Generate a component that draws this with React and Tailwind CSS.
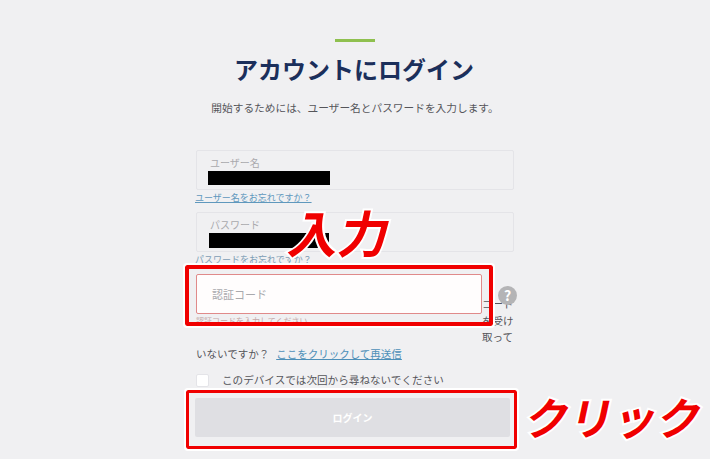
import React from 'react'

const font = { fontFamily: '"Noto Sans CJK JP", "Noto Sans", sans-serif' }

function Field({ label, barClass, linkClass, link }) {
  return (
    <div className="mb-[8px]">
      <div className="h-10 border border-[#e4e4e8] rounded-[2px] pl-[13px] pt-[5px]">
        <div className="text-[10px] leading-[14px] text-[#a9a9ad]">{label}</div>
        <div className={`bg-black ${barClass}`} />
      </div>
      <a className={`block -ml-px mt-[1px] text-[9px] leading-[13px] ${linkClass}`}>{link}</a>
    </div>
  )
}

export default function App() {
  return (
    <div style={font} className="relative h-[459px] w-[710px] overflow-hidden bg-[#f0f0f2]">
      <div className="mx-auto w-[318px] pt-[39px]">
        <div className="mx-auto h-[3px] w-10 bg-[#8fc04f]" />
        <h1 className="mt-[9px] -ml-[17px] -mr-[15px] text-center text-[24px] leading-[36px] font-bold text-[#1b2f5b]">
          アカウントにログイン
        </h1>
        <p className="mt-[13px] -mx-4 text-center text-[10.7px] leading-[16px] text-[#55555a]">
          開始するためには、ユーザー名とパスワードを入力します。
        </p>

        <div className="mt-[34px]">
          <Field
            label="ユーザー名"
            barClass="-ml-[2px] mt-[1px] h-[14px] w-[122px]"
            linkClass="text-[#5f98bd] underline"
            link="ユーザー名をお忘れですか？"
          />
          <Field
            label="パスワード"
            barClass="-ml-[1px] mt-[1px] h-[15px] w-[120px]"
            linkClass="text-[#7d9db5]"
            link="パスワードをお忘れですか？"
          />
        </div>

        <div className="relative text-[10.5px] leading-[16.5px] text-[#55555a]">
          <div className="float-left w-[286px]">
            <div className="h-10 border border-[#e08a8a] rounded-[2px] bg-[#fffdfd] pl-[15px] text-[11px] leading-[38px] text-[#a9a9ad]">
              認証コード
            </div>
            <div className="h-[16px] text-[8px] leading-[14px] text-[#c4a8a8]">認証コードを入力してください</div>
          </div>
          <div className="pt-[22px]">
            コード
            <br />
            を受け
            <br />
            取って
            <br />
            いないですか？
            <a className="ml-[7px] text-[#4d8fb8] underline">ここをクリックして再送信</a>
          </div>
          <div className="absolute right-[-3px] top-[12px] flex h-[19px] w-[19px] items-center justify-center rounded-full bg-[#b4b4b6] text-[14px] font-bold text-white">
            ?
          </div>
        </div>

        <label className="mt-[10px] flex items-center">
          <span className="h-[13px] w-[13px] rounded-[2px] border border-[#e4e4e8] bg-white" />
          <span className="ml-[13px] text-[10.6px] leading-[16px] text-[#55555a]">このデバイスでは次回から尋ねないでください</span>
        </label>

        <button className="mt-[10px] -ml-px block h-[39px] w-[315px] rounded-[2px] bg-[#dfdfe3] text-[10px] font-bold text-white">
          ログイン
        </button>
      </div>

      {/* annotations pasted over the screenshot */}
      <div className="absolute left-[185px] top-[265px] h-[61px] w-[308px] rounded-[2px] border-4 border-[#f00000] outline-2 outline-white" />
      <div className="absolute left-[186px] top-[390px] h-[59px] w-[331px] rounded-[2px] border-[3px] border-[#f00000] outline-2 outline-white" />
      <div className="absolute left-[291px] top-[196px] text-[50px] leading-[70px] font-bold text-[#f00000] [-webkit-text-stroke:4px_white] [paint-order:stroke_fill] -skew-x-12">
        入力
      </div>
      <div className="absolute left-[527px] top-[384px] text-[44px] leading-[64px] font-bold text-[#f00000] [-webkit-text-stroke:4px_white] [paint-order:stroke_fill] -skew-x-12">
        クリック
      </div>
    </div>
  )
}
